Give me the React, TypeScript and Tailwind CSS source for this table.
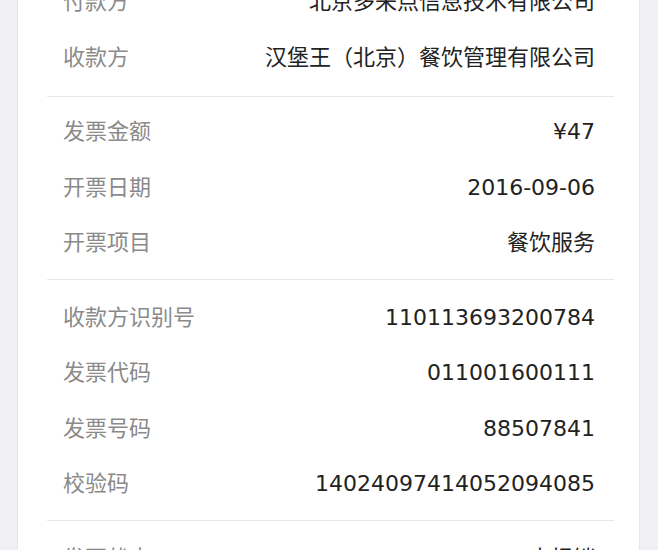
import React from 'react';

type Row = { label: string; value: string };

const sections: Row[][] = [
  [
    { label: '付款方', value: '北京多来点信息技术有限公司' },
    { label: '收款方', value: '汉堡王（北京）餐饮管理有限公司' },
  ],
  [
    { label: '发票金额', value: '¥47' },
    { label: '开票日期', value: '2016-09-06' },
    { label: '开票项目', value: '餐饮服务' },
  ],
  [
    { label: '收款方识别号', value: '110113693200784' },
    { label: '发票代码', value: '011001600111' },
    { label: '发票号码', value: '88507841' },
    { label: '校验码', value: '14024097414052094085' },
  ],
  [{ label: '发票状态', value: '未报销' }],
];

const pads = ['pt-[9px] pb-[12px]', 'pt-[6px] pb-[9px] border-t', 'py-[9px] border-t', 'py-[9px] border-t'];

const InfoRow: React.FC<Row> = ({ label, value }) => (
  <div className="flex h-[55.5px] items-center pl-4 pr-[19px]">
    <div className="flex w-full items-baseline justify-between text-[22px] leading-none">
      <span className="text-[#8a8a8a] font-['Noto_Sans_CJK_SC',sans-serif]">{label}</span>
      <span className="text-[#222] font-['DejaVu_Sans','Noto_Sans_CJK_SC',sans-serif]">{value}</span>
    </div>
  </div>
);

export default function App() {
  return (
    <div className="h-[550px] w-[658px] overflow-hidden bg-[#efeff4]">
      <div className="ml-[17px] mr-[18px] -mt-[36px] h-[700px] border-x border-[#e6e6ea] bg-white pl-[29px] pr-[25px]">
        {sections.map((rows, i) => (
          <div key={i} className={`border-[#e8e8e8] ${pads[i]}`}>
            {rows.map((r) => (
              <InfoRow key={r.label} {...r} />
            ))}
          </div>
        ))}
      </div>
    </div>
  );
}
